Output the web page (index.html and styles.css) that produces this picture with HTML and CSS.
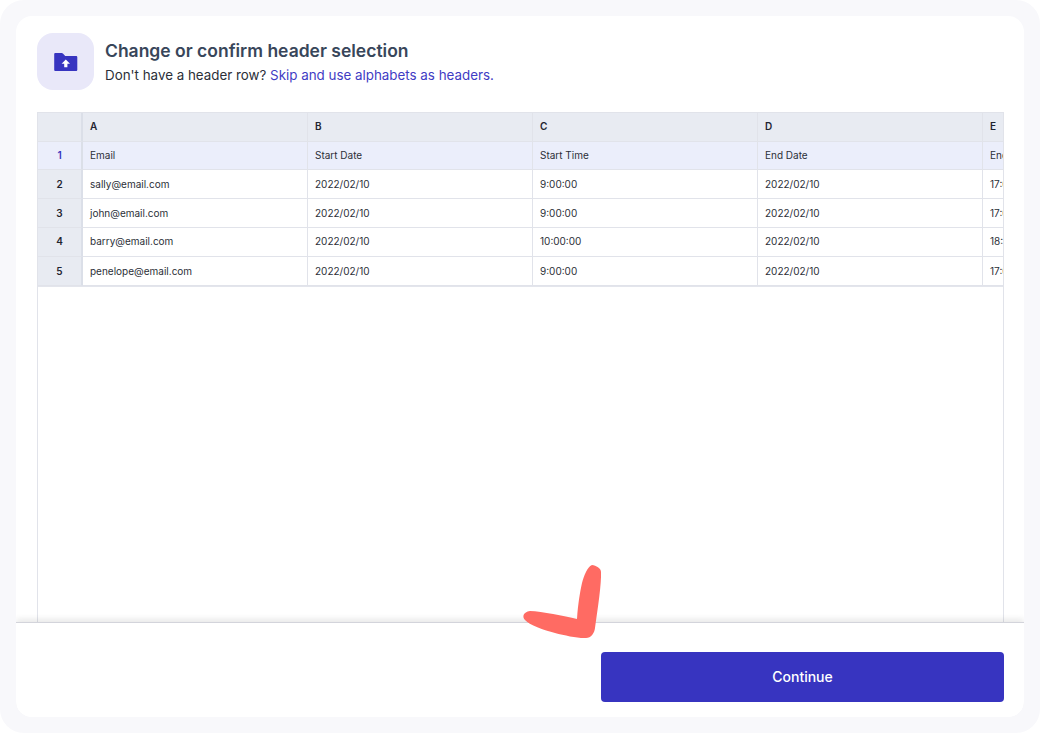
FILE: index.html
```html
<!DOCTYPE html>
<html lang="en">
<head>
<meta charset="utf-8">
<title>Change or confirm header selection</title>
<link rel="stylesheet" href="styles.css">
</head>
<body>
<div class="frame">
  <main class="card">
    <header class="head">
      <div class="badge">
        <svg class="folder" width="24" height="20" viewBox="0 0 24 20" aria-hidden="true">
          <path fill="#3734c0" d="M1.5 1h6.2c.5 0 .9.2 1.2.5L11.2 4h10.8c.8 0 1.3.5 1.3 1.3v12.4c0 .8-.5 1.3-1.3 1.3H1.5C.7 19 .2 18.500 .2 17.700V2.300C.2 1.500.7 1 1.500 1z"/>
          <path fill="#fff" d="M11.800 7.500l4.200 4.300h-2.600v3.400h-3.200v-3.400H7.600z"/>
        </svg>
      </div>
      <div class="head-text">
        <h1 class="title">Change or confirm header selection</h1>
        <p class="sub">Don't have a header row? <a class="link" href="#">Skip and use alphabets as headers.</a></p>
      </div>
    </header>
    <section class="sheet">
      <div class="grid">
        <div class="c corner"></div><div class="c col">A</div><div class="c col">B</div><div class="c col">C</div><div class="c col">D</div><div class="c col last">E</div>
        <div class="c rn sel">1</div><div class="c sel">Email</div><div class="c sel">Start Date</div><div class="c sel">Start Time</div><div class="c sel">End Date</div><div class="c sel last">End Time</div>
        <div class="c rn">2</div><div class="c">sally@email.com</div><div class="c">2022/02/10</div><div class="c">9:00:00</div><div class="c">2022/02/10</div><div class="c last">17:00:00</div>
        <div class="c rn">3</div><div class="c">john@email.com</div><div class="c">2022/02/10</div><div class="c">9:00:00</div><div class="c">2022/02/10</div><div class="c last">17:00:00</div>
        <div class="c rn up">4</div><div class="c up">barry@email.com</div><div class="c up">2022/02/10</div><div class="c up">10:00:00</div><div class="c up">2022/02/10</div><div class="c last up">18:00:00</div>
        <div class="c rn">5</div><div class="c">penelope@email.com</div><div class="c">2022/02/10</div><div class="c">9:00:00</div><div class="c">2022/02/10</div><div class="c last">17:00:00</div>
      </div>
    </section>
    <footer class="foot">
      <button class="continue" type="button">Continue</button>
    </footer>
    <svg class="check" width="90" height="84" viewBox="0 0 90 84" aria-hidden="true">
      <path fill="#ff6b63" d="M72 3C76 3.500 81 6 81 10C81.500 22 78 45 75 66C74.500 71 71 76 66 76C58 76.500 45 73.500 35 71C24 68 9 63 5 58C2 55 3 50 10 49C22 49.500 44 54 57 57C58 42 60 30 62 21C64 14 67 5 72 3Z"/>
    </svg>
  </main>
</div>
</body>
</html>
```

FILE: styles.css
```css
* { box-sizing: border-box; }
html, body { margin: 0; height: 100%; background: #fff; }
body { font-family: "Inter", "Liberation Sans", sans-serif; color: #1f2430; overflow: hidden; }
.frame { width: 1040px; height: 733px; background: #f8f8fb; border-radius: 24px; padding: 16px; }
.card { position: relative; width: 1008px; height: 701px; background: #fff; border-radius: 16px; display: flex; flex-direction: column; overflow: hidden; }
.head { display: flex; gap: 11px; padding: 17px 21px 0; height: 96px; flex: none; align-items: flex-start; }
.badge { width: 57px; height: 57px; border-radius: 16px; background: #e9e8f9; display: flex; align-items: center; justify-content: center; flex: none; }
.folder { display: block; }
.head-text { padding-top: 7px; }
.title { margin: 0; font-size: 17.500px; line-height: 22px; font-weight: 600; color: #38465a; }
.sub { margin: 3px 0 0; font-size: 13.360px; line-height: 20px; color: #2b2f38; }
.link { color: #3f3cc4; text-decoration: none; }
.sheet { flex: 1; min-height: 0; margin: 0 20px 0 21px; border: 1px solid #e1e3ea; border-bottom: 0; overflow: hidden; }
.grid { display: grid; grid-template-columns: 45px 225px 225px 225px 225px 225px; grid-template-rows: 29px 28px 29px 29px 29px 29px; width: fit-content; border-bottom: 1px solid #e3e5ec; }
.c { font-size: 10px; padding-left: 7px; display: flex; align-items: center; border-right: 1px solid #e1e3ea; border-bottom: 1px solid #e1e3ea; background: #fff; white-space: nowrap; overflow: hidden; color: #2b2f38; }
.corner, .col { background: #e8ebf2; }
.col { font-weight: 600; color: #1f2430; padding-bottom: 2px; }
.rn { background: #e8ebf2; justify-content: center; padding-left: 0; font-weight: 600; border-right: 2px solid #dbdfe8; color: #1f2430; }
.corner { border-right: 2px solid #dbdfe8; }
.sel { background: #ebeefb; padding-bottom: 2px; }
.up { padding-bottom: 2px; }
.rn.sel { color: #3734c0; }
.last { border-right: 0; }
.foot { position: relative; flex: none; height: 95px; background: #fff; border-top: 1px solid #d3d4db; box-shadow: 0 -3px 6px rgba(0, 0, 0, .09); display: flex; justify-content: flex-end; align-items: flex-start; padding: 29px 20px 0; }
.continue { width: 403px; height: 50px; border: 0; border-radius: 4px; background: #3734c0; color: #fff; font: 500 14px "Inter", "Liberation Sans", sans-serif; padding-bottom: 2px; }
.check { position: absolute; left: 504px; top: 546px; }
```
